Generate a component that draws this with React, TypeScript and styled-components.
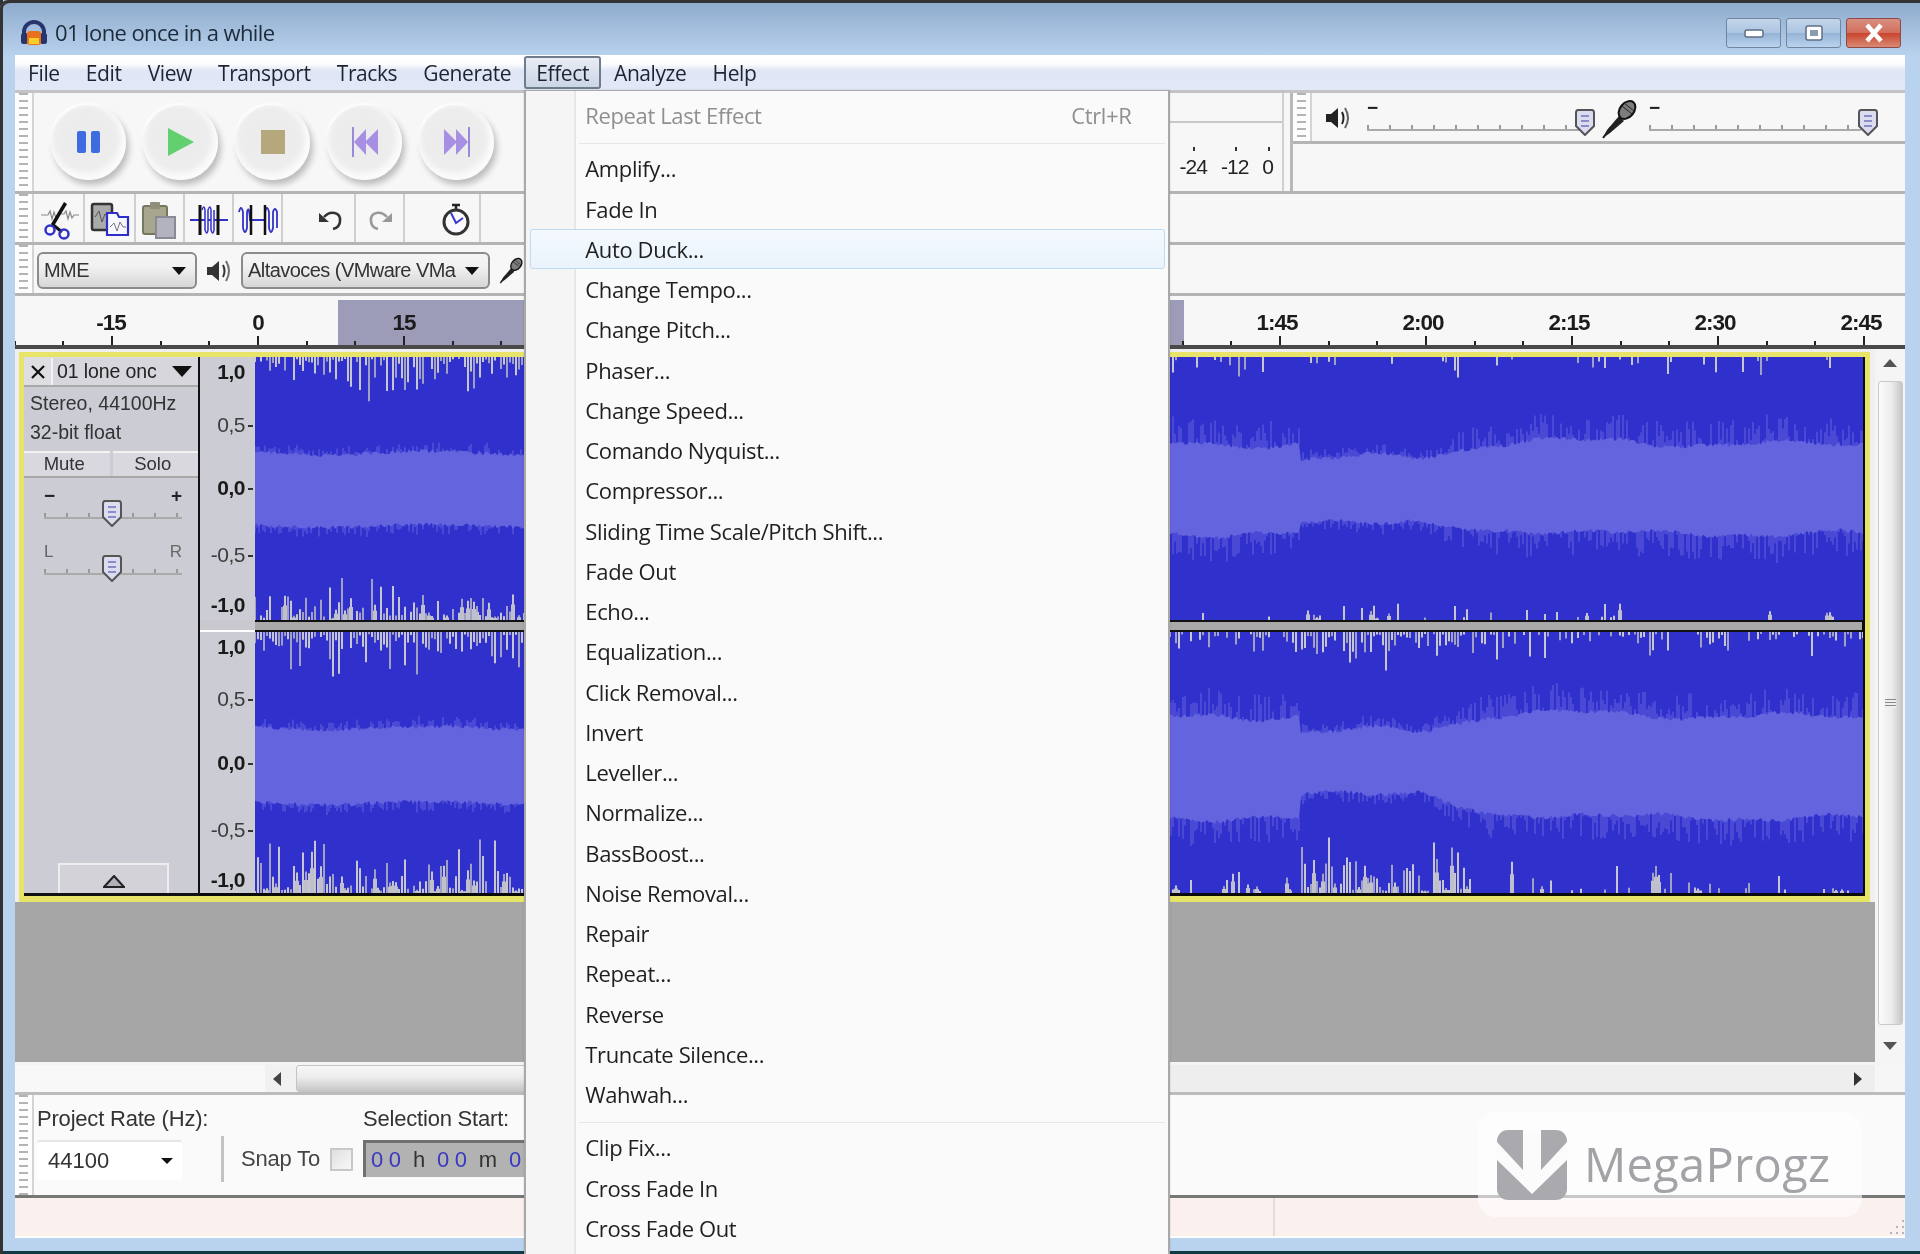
import { useMemo } from 'react';
import styled, { createGlobalStyle } from 'styled-components';

const GlobalStyle = createGlobalStyle`
  html, body { margin: 0; padding: 0; background: #b9d3ee; }
  body { font-family: "Liberation Sans", Arial, sans-serif; color: #222; }
`;

// ---- data ----
const MENUS = ['File', 'Edit', 'View', 'Transport', 'Tracks', 'Generate', 'Effect', 'Analyze', 'Help'];

const EFFECTS_A = [
  'Amplify...', 'Fade In', 'Auto Duck...', 'Change Tempo...', 'Change Pitch...', 'Phaser...', 'Change Speed...',
  'Comando Nyquist...', 'Compressor...', 'Sliding Time Scale/Pitch Shift...', 'Fade Out', 'Echo...', 'Equalization...',
  'Click Removal...', 'Invert', 'Leveller...', 'Normalize...', 'BassBoost...', 'Noise Removal...', 'Repair', 'Repeat...',
  'Reverse', 'Truncate Silence...', 'Wahwah...',
];
const EFFECTS_B = ['Clip Fix...', 'Cross Fade In', 'Cross Fade Out'];

const RULER = [
  { label: '-15', x: 96 }, { label: '0', x: 243 }, { label: '15', x: 389 }, { label: '1:45', x: 1262 },
  { label: '2:00', x: 1408 }, { label: '2:15', x: 1554 }, { label: '2:30', x: 1700 }, { label: '2:45', x: 1846 },
];

const AXIS_1 = [
  { label: '1,0', y: 15, bold: true, tick: false }, { label: '0,5', y: 68, bold: false, tick: true },
  { label: '0,0', y: 131, bold: true, tick: true }, { label: '-0,5', y: 198, bold: false, tick: true },
  { label: '-1,0', y: 248, bold: true, tick: false },
];
const AXIS_2 = [
  { label: '1,0', y: 15, bold: true, tick: false }, { label: '0,5', y: 67, bold: false, tick: true },
  { label: '0,0', y: 131, bold: true, tick: true }, { label: '-0,5', y: 198, bold: false, tick: true },
  { label: '-1,0', y: 248, bold: true, tick: false },
];

// ---- waveform generator, seeded so the picture never changes ----
const seeded = (s: number) => () => {
  s |= 0; s = (s + 0x6d2b79f5) | 0;
  let t = Math.imul(s ^ (s >>> 15), 1 | s);
  t = (t + Math.imul(t ^ (t >>> 7), 61 | t)) ^ t;
  return ((t ^ (t >>> 14)) >>> 0) / 4294967296;
};

type Edge = { left: number; loud: number; other: number };
type ChannelCfg = {
  seed: number; height: number; top: Edge; bottom: Edge;
  spikeTop: (px: number, loud: boolean) => [number, number];
  spikeBottom: (px: number, loud: boolean) => [number, number];
};

const WAVE_W = 1608;

// the quieter stretch around 1:50, sharp at its start and fading at its end
const quiet = (px: number) => {
  if (px < 1300 || px > 1490) return 0;
  if (px < 1420) return 1;
  return (1490 - px) / 70;
};

const buildChannel = (c: ChannelCfg) => {
  const r = seeded(c.seed);
  const tops: string[] = [];
  const bottoms: string[] = [];
  let fringe = '';
  let light = '';
  let dim = '';
  let wide = '';
  for (let x = 0; x <= WAVE_W; x += 2) {
    const px = x + 255;
    const q = quiet(px);
    const isLeft = px < 540;
    const drift = Math.sin(x / 37) * 2 + Math.sin(x / 113) * 1.5;
    const slow = isLeft ? 0 : Math.sin(x / 31) * 2 + Math.sin(x / 13) * 1.5;
    const baseT = isLeft ? c.top.left : c.top.other + (c.top.loud - c.top.other) * q;
    const baseB = isLeft ? c.bottom.left : c.bottom.other + (c.bottom.loud - c.bottom.other) * q;
    const t = baseT + drift + slow + r() * 4;
    const b = baseB + drift - slow + r() * 4;
    tops.push(`${x} ${t.toFixed(1)}`);
    bottoms.unshift(`${x} ${b.toFixed(1)}`);
    const reach = isLeft ? 9 : 26 - 17 * q;
    if (r() > 0.35) {
      fringe += `M${x} ${t + 1}V${(t - r() * reach).toFixed(1)}`;
      fringe += `M${x} ${b - 1}V${(b + r() * reach).toFixed(1)}`;
    }
  }
  for (let x = 0; x <= WAVE_W; x += 3) {
    const px = x + 255;
    const loud = px > 1300 && px < 1460;
    const [dt, lt] = c.spikeTop(px, loud);
    if (r() < dt) {
      const len = (2 + r() * r() * lt).toFixed(1);
      if (r() > 0.45) light += `M${x} 0V${len}`; else dim += `M${x} 0V${len}`;
    }
    const [db, lb] = c.spikeBottom(px, loud);
    if (r() < db) {
      const len = 2 + r() * r() * lb;
      const path = `M${x} ${c.height}V${(c.height - len).toFixed(1)}`;
      if (r() > 0.7) wide += `M${x} ${c.height}V${(c.height - len * 0.6).toFixed(1)}`;
      if (r() > 0.45) light += path; else dim += path;
    }
  }
  return { solid: `M${tops.join('L')}L${bottoms.join('L')}Z`, fringe, light, dim, wide };
};

const CHANNEL_1: ChannelCfg = {
  seed: 11, height: 263,
  top: { left: 93, loud: 100, other: 84 },
  bottom: { left: 166, loud: 164, other: 174 },
  spikeTop: (px) => (px < 540 ? [0.85, 48] : [0.14, 24]),
  spikeBottom: (px) => (px < 540 ? [0.85, 44] : [0.12, 18]),
};
const CHANNEL_2: ChannelCfg = {
  seed: 29, height: 261,
  top: { left: 93, loud: 98, other: 81 },
  bottom: { left: 168, loud: 160, other: 183 },
  spikeTop: (px, loud) => (px < 540 ? [0.9, 50] : loud ? [0.9, 48] : [0.5, 30]),
  spikeBottom: (px, loud) => (px < 540 ? [0.9, 60] : loud ? [0.9, 62] : [0.3, 32]),
};

// ---- window frame ----
const Window = styled.div`
  position: relative;
  width: 1920px;
  height: 1254px;
  overflow: hidden;
  display: flex;
  flex-direction: column;
  background: #b9d3ee;
  box-shadow: inset 3px 0 0 #333, inset 0 -3px 0 #123a44;
  filter: blur(0.55px);
`;

const TitleBar = styled.div`
  height: 55px;
  flex: none;
  display: flex;
  align-items: center;
  padding: 5px 19px 0 20px;
  gap: 7px;
  border-top: 3px solid #333;
  border-top-left-radius: 8px;
  box-sizing: border-box;
  box-shadow: inset 3px 0 0 #333;
  background: linear-gradient(#8facce, #b8d1ec);
`;

const TitleText = styled.span`
  flex: 1;
  font: 22px "Open Sans", sans-serif;
  letter-spacing: -0.6px;
  color: #1d2b3a;
`;

const CaptionButtons = styled.div`
  display: flex;
  gap: 5px;
  margin-top: 2px;
`;

const CaptionButton = styled.div<{ $close?: boolean }>`
  width: 55px;
  height: 30px;
  border: 1px solid ${(p) => (p.$close ? '#8c4a48' : '#70859e')};
  border-radius: 3px;
  display: flex;
  align-items: center;
  justify-content: center;
  box-sizing: border-box;
  background: ${(p) =>
    p.$close
      ? 'linear-gradient(#d88f80, #d2705e 48%, #c9452f 52%, #d88a74)'
      : 'linear-gradient(#c3d5ea, #adc6e2 48%, #95b4d6 52%, #b9d3ee)'};
`;

const Client = styled.div`
  flex: none;
  height: 1183px;
  margin: 0 15px;
  display: flex;
  flex-direction: column;
  background: #f7f7f7;
`;

// ---- menu bar ----
const MenuBar = styled.nav`
  height: 38px;
  flex: none;
  display: flex;
  align-items: center;
  box-sizing: border-box;
  border-bottom: 3px solid #c4c4c8;
  background: linear-gradient(#ffffff 0, #fdfdfe 25%, #e0e6f5 45%, #e2e8f6 100%);
`;

const MenuItem = styled.div<{ $open?: boolean }>`
  position: relative;
  height: 33px;
  padding: 0 ${(p) => (p.$open ? '10px' : '13.1px')};
  display: flex;
  align-items: center;
  box-sizing: border-box;
  border: ${(p) => (p.$open ? '2px solid #6f7c8c' : '0 none')};
  border-radius: 3px;
  font: 21px "Open Sans", sans-serif;
  letter-spacing: -0.42px;
  color: #1c2433;
  background: ${(p) => (p.$open ? 'linear-gradient(#e9edf4, #ccd5e4)' : 'transparent')};
`;

const Popup = styled.div`
  position: absolute;
  left: -2px;
  top: 32px;
  width: 646px;
  height: 1172px;
  box-sizing: border-box;
  padding: 4px 3px 0 4px;
  border: 1px solid #a8a8a8;
  border-width: 1px 2px 0 2px;
  box-shadow: 0 0 2px rgba(0, 0, 0, 0.15);
  background: linear-gradient(to right, #f5f5f5 0 48px, #e6e6e6 48px 50px, #fafafa 50px);
  z-index: 5;
`;

const PopupRow = styled.div<{ $disabled?: boolean; $hover?: boolean }>`
  height: 40.25px;
  box-sizing: border-box;
  display: flex;
  align-items: center;
  justify-content: space-between;
  padding: 0 33px 0 54px;
  border: 1px solid ${(p) => (p.$hover ? '#bcdcf4' : 'transparent')};
  border-radius: 3px;
  background: ${(p) => (p.$hover ? 'linear-gradient(#f4f9fe, #eaf3fc)' : 'transparent')};
  font: 22px "Open Sans", sans-serif;
  letter-spacing: -0.38px;
  color: ${(p) => (p.$disabled ? '#8f8f8f' : '#1f1f1f')};
`;

const PopupRule = styled.div`
  height: 1px;
  margin: 8px 0 4px 49px;
  background: #e8e8e8;
`;

// ---- toolbars ----
const Dock = styled.div`
  height: 203px;
  flex: none;
  display: flex;
  flex-direction: column;
`;

const DockRow = styled.div<{ $h: number }>`
  height: ${(p) => p.$h}px;
  flex: none;
  display: flex;
  box-sizing: border-box;
  border-bottom: 3px solid #b4b4b4;
`;

const Gripper = styled.div`
  width: 19px;
  flex: none;
  box-sizing: border-box;
  border-right: 2px solid #d4d4d4;
  background-color: #fdfdfd;
  background-image: repeating-linear-gradient(to bottom, #b4b4b4 0 2px, transparent 2px 7px);
  background-size: 9px 100%;
  background-repeat: no-repeat;
  background-position: center;
`;

const TransportBar = styled.div`
  flex: 1;
  display: flex;
  align-items: center;
  gap: 17px;
  padding-left: 17px;
`;

const RoundButton = styled.div`
  width: 75px;
  height: 75px;
  flex: none;
  border-radius: 50%;
  display: flex;
  align-items: center;
  justify-content: center;
  background: radial-gradient(circle at 47% 45%, #ebebeb 0, #ededed 52%, #fbfbfb 68%, #f1f1f1 100%);
  box-shadow: 3px 5px 6px rgba(0, 0, 0, 0.24), -1px -2px 3px rgba(255, 255, 255, 0.9);
`;

const MeterDock = styled.div`
  width: 400px;
  flex: none;
  display: flex;
  flex-direction: column;
  border-right: 2px solid #d0d0d0;
`;

const MeterTop = styled.div`
  height: 28px;
  flex: none;
  border-bottom: 2px solid #c8c8c8;
`;

const MeterScale = styled.div`
  flex: 1;
  display: flex;
  justify-content: flex-end;
  gap: 14px;
  padding: 32px 9px 0 0;
`;

const MeterMark = styled.span`
  position: relative;
  font: 21px "Liberation Sans", sans-serif;
  letter-spacing: -1px;
  color: #222;

  &::before {
    content: '';
    position: absolute;
    left: 50%;
    top: -8px;
    width: 2px;
    height: 4px;
    background: #333;
  }
`;

const DockEdge = styled.div`
  width: 6px;
  flex: none;
  background: #f7f7f7;
  border-right: 3px solid #b8b8b8;
`;

const MixerColumn = styled.div`
  width: 612px;
  flex: none;
  display: flex;
  flex-direction: column;
`;

const MixerBar = styled.div`
  height: 51px;
  flex: none;
  display: flex;
  box-sizing: border-box;
  border-bottom: 3px solid #b4b4b4;
  align-items: stretch;
`;

const MixerInner = styled.div`
  flex: 1;
  display: flex;
  align-items: flex-start;
  padding: 6px 0 0 13px;
  gap: 16px;
`;

const MixerSpeaker = styled.div`
  width: 26px;
  flex: none;
  margin-top: 4px;
`;

const MixerMic = styled.div`
  width: 38px;
  flex: none;
  margin: 1px -5px 0 5px;
`;

const EditCell = styled.div<{ $w: number; $line?: boolean }>`
  width: ${(p) => p.$w}px;
  flex: none;
  display: flex;
  align-items: center;
  justify-content: center;
  box-sizing: border-box;
  padding-top: 3px;
  border-right: ${(p) => (p.$line ? '2px solid #cfcfcf' : '0 none')};
`;

const EditGap = styled.div<{ $w: number }>`
  width: ${(p) => p.$w}px;
  flex: none;
`;

const DeviceBar = styled.div`
  flex: 1;
  display: flex;
  align-items: center;
  gap: 9px;
  padding: 3px 0 0 3px;
`;

const Combo = styled.div<{ $w: number }>`
  width: ${(p) => p.$w}px;
  height: 37px;
  flex: none;
  display: flex;
  align-items: center;
  justify-content: space-between;
  box-sizing: border-box;
  padding: 0 9px 0 5px;
  border: 2px solid #8b8b8b;
  border-radius: 6px;
  background: linear-gradient(#f5f5f5, #f1f1f1 40%, #d6d6d6);
  font: 20px "Liberation Sans", sans-serif;
  letter-spacing: -0.55px;
  color: #333;
  white-space: nowrap;
  overflow: hidden;
`;

const Caret = styled.span<{ $w?: number }>`
  flex: none;
  width: 0;
  height: 0;
  border-left: ${(p) => p.$w ?? 7}px solid transparent;
  border-right: ${(p) => p.$w ?? 7}px solid transparent;
  border-top: ${(p) => ((p.$w ?? 7) * 8) / 7}px solid #111;
`;

// ---- slider used on mixer and track panel ----
const SliderBlock = styled.div<{ $w: number }>`
  position: relative;
  width: ${(p) => p.$w}px;
  flex: none;
`;

const SliderEnds = styled.div<{ $dim?: boolean }>`
  display: flex;
  justify-content: space-between;
  height: 18px;
  font: ${(p) => (p.$dim ? '400 17px' : '700 19px')} "Liberation Sans", sans-serif;
  line-height: 18px;
  color: ${(p) => (p.$dim ? '#666' : '#222')};
`;

const SliderTicks = styled.div`
  height: 9px;
  margin-top: 3px;
  border-bottom: 2px solid #aaa;
  background-image: repeating-linear-gradient(to right, #999 0 2px, transparent 2px 22px);
  background-size: 100% 4px;
  background-position: bottom;
  background-repeat: no-repeat;
`;

const Thumb = styled.svg<{ $at: number; $top: number }>`
  position: absolute;
  left: ${(p) => p.$at}px;
  top: ${(p) => p.$top}px;
`;

const MicIcon = ({ big }: { big?: boolean }) => (
  <svg width={big ? 38 : 24} height={big ? 40 : 42} viewBox="0 0 36 40">
    <path d="M2 38 L6 30 L18 16 L23 21 L9 33 Z" fill="#222" />
    <path d="M2 38 L10 27" stroke="#222" strokeWidth="2" />
    <ellipse cx="26" cy="10" rx="7" ry="10" transform="rotate(40 26 10)" fill="#7d7d7d" stroke="#111" strokeWidth="2" />
    <path d="M21 6 L31 14 M23 3 L33 11" stroke="#222" strokeWidth="1" />
  </svg>
);

const SpeakerIcon = ({ color = '#222' }: { color?: string }) => (
  <svg width="26" height="30" viewBox="0 0 26 30">
    <path d="M1 11 H6 L13 5 V25 L6 19 H1 Z" fill={color} />
    <path d="M17 9 Q20 15 17 21" stroke={color} strokeWidth="2" fill="none" />
    <path d="M20 5 Q26 15 20 25" stroke={color} strokeWidth="2" fill="none" opacity="0.7" />
  </svg>
);

const ThumbShape = ({ at, top }: { at: number; top: number }) => (
  <Thumb $at={at} $top={top} width="24" height="28" viewBox="0 0 22 28">
    <path d="M4 2 H18 Q20 2 20 5 V18 L11 27 L2 18 V5 Q2 2 4 2 Z" fill="#dcdcf0" stroke="#555" strokeWidth="2" />
    <path d="M7 8 H15 M7 13 H15 M7 18 H15" stroke="#8c8cc8" strokeWidth="2" />
  </Thumb>
);

// ---- ruler ----
const Ruler = styled.div`
  position: relative;
  height: 53px;
  flex: none;
  box-sizing: border-box;
  border-bottom: 4px solid #4a4a4a;
  background: #f7f7f7;
  overflow: hidden;
`;

const RulerSelection = styled.div`
  position: absolute;
  left: 323px;
  width: 846px;
  top: 4px;
  bottom: 0;
  background: #9c9cb8;
`;

const RulerLabel = styled.span`
  position: absolute;
  top: 14px;
  transform: translateX(-50%);
  font: 700 22.5px "Liberation Sans", sans-serif;
  letter-spacing: -1px;
  color: #1c1c1c;
`;

const RulerTick = styled.i<{ $major: boolean }>`
  position: absolute;
  bottom: 0;
  width: 2px;
  height: ${(p) => (p.$major ? 9 : 4)}px;
  background: #222;
`;

// ---- tracks ----
const TrackArea = styled.div`
  height: 713px;
  flex: none;
  display: flex;
  background: #a6a6a6;
`;

const TrackColumn = styled.div`
  flex: 1;
  min-width: 0;
`;

const TrackFrame = styled.div`
  height: 553px;
  box-sizing: border-box;
  background: #efefef;
  padding: 3px 5px 0 4px;
`;

const TrackBorder = styled.div`
  height: 550px;
  box-sizing: border-box;
  display: flex;
  border: 5px solid #e8e46a;
  border-bottom-width: 6px;
`;

const TrackPanel = styled.div`
  width: 174px;
  flex: none;
  display: flex;
  flex-direction: column;
  background: #cbccd4;
  border-bottom: 3px solid #111;
  border-top: 1px solid #ddd;
`;

const PanelTitle = styled.div`
  height: 27px;
  flex: none;
  display: flex;
  border-bottom: 2px solid #a9a9a9;
`;

const CloseBox = styled.div`
  width: 27px;
  flex: none;
  display: flex;
  align-items: center;
  justify-content: center;
  border-right: 2px solid #f2f2f2;
  background: #dddde2;
`;

const TrackName = styled.div`
  flex: 1;
  display: flex;
  align-items: center;
  justify-content: space-between;
  padding: 0 6px 0 4px;
  font: 19.5px "Liberation Sans", sans-serif;
  letter-spacing: -0.1px;
  color: #222;
  background: #d6d6dc;
`;

const PanelInfo = styled.div`
  height: 64px;
  flex: none;
  box-sizing: border-box;
  padding: 2px 0 0 6px;
  font: 19.5px/29px "Liberation Sans", sans-serif;
  color: #333;
`;

const MuteRow = styled.div`
  height: 27px;
  flex: none;
  display: flex;
  gap: 3px;
  border-bottom: 2px solid #a8a8a8;
  box-sizing: border-box;
`;

const PanelButton = styled.div`
  flex: 1;
  display: flex;
  align-items: center;
  justify-content: center;
  box-sizing: border-box;
  padding: 0 5px 1px 0;
  font: 18.5px "Liberation Sans", sans-serif;
  color: #333;
  background: #d8d8de;
  border-top: 2px solid #f2f2f2;
`;

const PanelSlider = styled(SliderBlock)`
  margin: 9px 0 0 20px;
  height: 47px;
`;

const PanelSpacer = styled.div`
  flex: 1;
`;

const CollapseButton = styled.div`
  width: 111px;
  height: 30px;
  margin-left: 34px;
  box-sizing: border-box;
  display: flex;
  align-items: flex-end;
  justify-content: center;
  padding-bottom: 5px;
  border: 2px solid #eee;
  border-bottom: 0 none;
  background: #d2d2d8;
`;

const PanelRule = styled.div`
  width: 2px;
  flex: none;
  background: #111;
`;

const Channels = styled.div`
  flex: 1;
  min-width: 0;
  display: flex;
  flex-direction: column;
  border-right: 3px solid #0a0a0a;
  border-bottom: 3px solid #0a0a0a;
`;

const ChannelRow = styled.div<{ $h: number }>`
  height: ${(p) => p.$h}px;
  flex: none;
  display: flex;
`;

const ChannelGap = styled.div`
  height: 12px;
  flex: none;
  display: flex;
`;

const GapRuler = styled.div`
  width: 55px;
  flex: none;
  background: #c8c8ce;
  border-bottom: 2px solid #fff;
  box-sizing: border-box;
`;

const GapBar = styled.div`
  flex: 1;
  background: #a9a9a9;
  border-top: 2px solid #111;
  border-bottom: 2px solid #111;
`;

const Axis = styled.div`
  position: relative;
  width: 55px;
  flex: none;
  background: #ccccd4;
`;

const AxisLabel = styled.span<{ $bold: boolean }>`
  position: absolute;
  right: 10px;
  transform: translateY(-50%);
  font: ${(p) => (p.$bold ? 700 : 400)} 21px "Liberation Sans", sans-serif;
  letter-spacing: -0.5px;
  color: ${(p) => (p.$bold ? '#1a1a1a' : '#3c3c3c')};
`;

const AxisTick = styled.i`
  position: absolute;
  right: 2px;
  width: 5px;
  height: 2px;
  background: #333;
`;

const Wave = styled.svg`
  display: block;
  flex: none;
`;

const VScroll = styled.div`
  width: 30px;
  flex: none;
  display: flex;
  flex-direction: column;
  align-items: center;
  background: #f5f5f5;
  box-sizing: border-box;
  padding-top: 10px;
`;

const ScrollThumb = styled.div`
  width: 25px;
  height: 644px;
  margin: 14px 0 17px;
  flex: none;
  display: flex;
  align-items: center;
  justify-content: center;
  box-sizing: border-box;
  border: 1px solid #c9c9c9;
  border-radius: 3px;
  background: linear-gradient(to right, #fbfbfb, #ececec 55%, #c6c6c6);
`;

const ScrollGrip = styled.div`
  width: 11px;
  height: 9px;
  background: repeating-linear-gradient(to bottom, #8a8a8a 0 1px, #eee 1px 3px);
`;

const ArrowUp = styled.span`
  width: 0;
  height: 0;
  border: 7px solid transparent;
  border-top: 0 none;
  border-bottom: 8px solid #555;
`;

const ArrowDown = styled(ArrowUp)`
  border-bottom: 0 none;
  border-top: 8px solid #555;
`;

// ---- horizontal scroll ----
const HScroll = styled.div`
  height: 33px;
  flex: none;
  display: flex;
  align-items: stretch;
  box-sizing: border-box;
  border-top: 3px solid #f4f4f4;
  border-bottom: 3px solid #bcbcbc;
  background: #f8f8f8;
`;

const HSpace = styled.div`
  width: 250px;
  flex: none;
`;

const HButton = styled.div`
  width: 31px;
  flex: none;
  display: flex;
  align-items: center;
  justify-content: center;
  box-sizing: border-box;
  padding-right: 8px;
  background: #f1f1f1;
`;

const HThumb = styled.div`
  width: 600px;
  flex: none;
  border: 1px solid #c4c4c4;
  border-radius: 3px;
  background: linear-gradient(#f7f7f7, #ededed 45%, #c6c6c6);
`;

const HTrack = styled.div`
  flex: 1;
  display: flex;
  justify-content: flex-end;
  align-items: center;
  padding-right: 13px;
  background: #eeeeee;
`;

const HCorner = styled.div`
  width: 30px;
  flex: none;
  background: #f6f6f6;
`;

const ArrowLeft = styled.span`
  width: 0;
  height: 0;
  border: 7px solid transparent;
  border-left: 0 none;
  border-right: 8px solid #444;
`;

const ArrowRight = styled(ArrowLeft)`
  border-right: 0 none;
  border-left: 8px solid #333;
`;

// ---- selection bar ----
const SelectionBar = styled.div`
  height: 103px;
  flex: none;
  display: flex;
  box-sizing: border-box;
  border-bottom: 3px solid #777;
  background: #fafafa;
`;

const RateGroup = styled.div`
  width: 184px;
  flex: none;
  padding: 11px 0 0 3px;
`;

const BarLabel = styled.div`
  font: 22px "Liberation Sans", sans-serif;
  letter-spacing: -0.2px;
  color: #333;
  white-space: nowrap;
`;

const RateCombo = styled.div`
  width: 145px;
  height: 40px;
  margin-top: 8px;
  display: flex;
  align-items: center;
  justify-content: space-between;
  box-sizing: border-box;
  padding: 0 9px 0 11px;
  background: #fff;
  border-radius: 3px;
  border-top: 2px solid #e6e6e6;
  font: 22px "Liberation Sans", sans-serif;
  color: #333;
`;

const BarRule = styled.div`
  width: 3px;
  height: 46px;
  margin: 41px 17px 0 0;
  flex: none;
  background: #c2c2c2;
`;

const SnapGroup = styled.div`
  flex: none;
  width: 122px;
  display: flex;
  align-items: center;
  height: 34px;
  margin-top: 47px;
  gap: 10px;
  font: 22px "Liberation Sans", sans-serif;
  letter-spacing: -0.2px;
  color: #444;
  white-space: nowrap;
`;

const SnapBox = styled.div`
  width: 23px;
  height: 23px;
  flex: none;
  box-sizing: border-box;
  border: 2px solid #c8c8c8;
  background: linear-gradient(135deg, #e0e0e0, #f8f8f8);
`;

const StartGroup = styled.div`
  flex: none;
  padding-top: 11px;
`;

const TimeBox = styled.div`
  width: 240px;
  height: 37px;
  margin-top: 8px;
  display: flex;
  align-items: center;
  box-sizing: border-box;
  padding-left: 5px;
  border-top: 3px solid #707070;
  border-left: 3px solid #707070;
  background: #b2b2b2;
  font: 22px "Liberation Sans", sans-serif;
  letter-spacing: 5.6px;
  word-spacing: -5.5px;
  color: #333;
  white-space: pre;
`;

const Digit = styled.span`
  color: #3838c0;
`;

// ---- status bar + watermark ----
const StatusBar = styled.div`
  height: 40px;
  flex: none;
  display: flex;
  box-sizing: border-box;
  border-bottom: 2px solid #fff;
  background: #faf0ee;
`;

const StatusLeft = styled.div`
  width: 1258px;
  flex: none;
  border-right: 2px solid #e2dcda;
`;

const StatusRight = styled.div`
  flex: 1;
  display: flex;
  align-items: flex-end;
  justify-content: flex-end;
`;

const Watermark = styled.div`
  position: absolute;
  left: 1478px;
  top: 1112px;
  width: 384px;
  height: 105px;
  box-sizing: border-box;
  display: flex;
  align-items: center;
  gap: 17px;
  padding: 0 0 0 19px;
  border-radius: 18px;
  background: rgba(255, 255, 255, 0.6);
  z-index: 3;
`;

const WatermarkText = styled.span`
  font: 47px "Open Sans", sans-serif;
  letter-spacing: 0.3px;
  color: #a2a2a7;
  padding-bottom: 2px;
`;

// ---- icons ----
const AppIcon = () => (
  <svg width="28" height="28" viewBox="0 0 28 28">
    <path d="M4 19 V14 A10 10 0 0 1 24 14 V19" stroke="#26356b" strokeWidth="4" fill="none" />
    <rect x="1" y="15" width="7" height="11" rx="2.5" fill="#26356b" />
    <rect x="20" y="15" width="7" height="11" rx="2.5" fill="#26356b" />
    <rect x="7" y="13" width="14" height="14" rx="3" fill="#e9701c" />
    <rect x="9" y="20" width="10" height="6" fill="#f7cf2c" />
  </svg>
);

const CutIcon = () => (
  <svg width="40" height="40" viewBox="0 0 40 40">
    <path d="M1 15 H8 L10 11 L12 19 L14 12 L16 18 L18 14 H24 L26 11 L28 19 L30 12 L32 18 L34 15 H39" stroke="#888" strokeWidth="1.2" fill="none" />
    <path d="M24 2 L27 4 L14 26 L11 24 Z" fill="#111" />
    <path d="M12 24 L22 32" stroke="#111" strokeWidth="3" />
    <circle cx="10" cy="30" r="4.5" fill="none" stroke="#3232c8" strokeWidth="2.5" />
    <circle cx="24" cy="34" r="4.5" fill="none" stroke="#3232c8" strokeWidth="2.5" />
  </svg>
);

const CopyIcon = () => (
  <svg width="40" height="38" viewBox="0 0 40 38">
    <rect x="2" y="3" width="20" height="26" rx="2" fill="#aaa" stroke="#333" strokeWidth="2.5" />
    <path d="M5 16 L9 10 L12 21 L15 13 L18 16" stroke="#555" fill="none" />
    <path d="M17 12 H27 L29 16 H38 V34 H17 Z" fill="#f7f7ff" stroke="#2f2fc8" strokeWidth="2.2" />
    <path d="M20 26 L24 22 L27 30 L30 21 L33 26 H36" stroke="#777" fill="none" />
  </svg>
);

const PasteIcon = () => (
  <svg width="38" height="40" viewBox="0 0 38 40">
    <rect x="2" y="6" width="24" height="28" rx="2" fill="#a8a68c" stroke="#77765f" strokeWidth="2" />
    <rect x="9" y="2" width="10" height="7" rx="1" fill="#8f8e78" />
    <rect x="15" y="17" width="19" height="21" fill="#b3b3c0" stroke="#8a8a95" strokeWidth="2" />
  </svg>
);

const TrimIcon = () => (
  <svg width="40" height="36" viewBox="0 0 40 36">
    <path d="M1 18 H39" stroke="#3232c8" strokeWidth="2" />
    <path d="M13 8 Q15 2 16 8 V28 Q18 34 19 28 V8 Q21 2 22 8 V28 Q24 34 25 28 V8" fill="#f4f4ff" stroke="#3232c8" strokeWidth="1.5" />
    <path d="M11 3 V33 M29 3 V33" stroke="#111" strokeWidth="3" />
  </svg>
);

const SilenceIcon = () => (
  <svg width="42" height="36" viewBox="0 0 42 36">
    <path d="M2 10 Q4 2 6 10 V26 Q8 34 10 26 V10 Q12 2 13 18 H28 M28 10 Q30 2 32 10 V26 Q34 34 36 26 V10 Q38 4 40 10 V26" fill="none" stroke="#3232c8" strokeWidth="1.8" />
    <path d="M14 3 V33 M28 3 V33" stroke="#111" strokeWidth="2.5" />
  </svg>
);

const UndoIcon = ({ flip, color }: { flip?: boolean; color: string }) => (
  <svg width="26" height="26" viewBox="0 0 26 26" transform={flip ? 'scale(-1 1)' : undefined}>
    <path d="M6 10 C12 3 23 5 22 14 C22 18 19 21 15 22" stroke={color} strokeWidth="2.6" fill="none" />
    <path d="M1 6 L11 15 L1 15 Z" fill={color} />
  </svg>
);

const TimerIcon = () => (
  <svg width="30" height="34" viewBox="0 0 30 34">
    <path d="M11 2 H19 M15 2 V7" stroke="#222" strokeWidth="2.5" />
    <circle cx="15" cy="19" r="12" fill="#fbfbff" stroke="#333" strokeWidth="3" />
    <path d="M10 10 L15 20 L22 15" stroke="#3a3ac8" strokeWidth="2" fill="none" />
  </svg>
);

const LogoMark = () => (
  <svg width="70" height="70" viewBox="0 0 70 70">
    <rect x="0" y="0" width="70" height="70" rx="11" fill="#aaaaae" />
    <polygon points="0,12 26,40 26,0 44,0 44,40 70,12 70,30 35,64 0,30" fill="#fbfbfb" />
  </svg>
);

const ResizeGrip = () => (
  <svg width="18" height="18" viewBox="0 0 18 18">
    <path d="M16 2 V4 M16 8 V10 M16 14 V16 M10 8 V10 M10 14 V16 M4 14 V16" stroke="#b5b5b5" strokeWidth="2" />
  </svg>
);

const WaveForm = ({ cfg }: { cfg: ChannelCfg }) => {
  const d = useMemo(() => buildChannel(cfg), [cfg]);
  return (
    <Wave width={WAVE_W} height={cfg.height} viewBox={`0 0 ${WAVE_W} ${cfg.height}`}>
      <rect width={WAVE_W} height={cfg.height} fill="#3030cc" />
      <path d={d.fringe} stroke="#5151d8" strokeWidth="1.6" fill="none" />
      <path d={d.solid} fill="#6464de" />
      <path d={d.dim} stroke="#a0a0c4" strokeWidth="2" fill="none" />
      <path d={d.light} stroke="#c6c6d2" strokeWidth="2" fill="none" />
      <path d={d.wide} stroke="#c0c0cc" strokeWidth="4" fill="none" />
    </Wave>
  );
};

const ChannelAxis = ({ rows }: { rows: typeof AXIS_1 }) => (
  <Axis>
    {rows.map((r) => (
      <div key={r.label}>
        <AxisLabel $bold={r.bold} style={{ top: r.y }}>{r.label}</AxisLabel>
        {r.tick && <AxisTick style={{ top: r.y }} />}
      </div>
    ))}
  </Axis>
);

const App = () => {
  const ticks = useMemo(() => {
    const list: { x: number; major: boolean }[] = [];
    for (let i = 0; i < 40; i++) list.push({ x: i * 48.67 - 1.3, major: (i - 2) % 3 === 0 });
    return list;
  }, []);

  return (
    <>
      <GlobalStyle />
      <Window>
        <TitleBar>
          <AppIcon />
          <TitleText>01 lone once in a while</TitleText>
          <CaptionButtons>
            <CaptionButton>
              <svg width="20" height="12" viewBox="0 0 20 12"><rect x="1" y="3" width="18" height="7" rx="2" fill="#fff" stroke="#5d6f85" strokeWidth="1.5" /></svg>
            </CaptionButton>
            <CaptionButton>
              <svg width="20" height="18" viewBox="0 0 20 18"><rect x="2" y="2" width="16" height="14" rx="2" fill="#fff" stroke="#5d6f85" strokeWidth="1.5" /><rect x="6" y="6" width="8" height="6" fill="#8b9cb0" /></svg>
            </CaptionButton>
            <CaptionButton $close>
              <svg width="22" height="20" viewBox="0 0 22 20"><path d="M4 2 L18 18 M18 2 L4 18" stroke="#fff" strokeWidth="4.5" /></svg>
            </CaptionButton>
          </CaptionButtons>
        </TitleBar>

        <Client>
          <MenuBar>
            {MENUS.map((m) =>
              m === 'Effect' ? (
                <MenuItem key={m} $open>
                  {m}
                  <Popup>
                    <PopupRow $disabled>
                      <span>Repeat Last Effect</span>
                      <span>Ctrl+R</span>
                    </PopupRow>
                    <PopupRule />
                    {EFFECTS_A.map((e) => (
                      <PopupRow key={e} $hover={e === 'Auto Duck...'}>{e}</PopupRow>
                    ))}
                    <PopupRule />
                    {EFFECTS_B.map((e) => (
                      <PopupRow key={e}>{e}</PopupRow>
                    ))}
                  </Popup>
                </MenuItem>
              ) : (
                <MenuItem key={m}>{m}</MenuItem>
              ),
            )}
          </MenuBar>

          <Dock>
            <DockRow $h={101}>
              <Gripper />
              <TransportBar>
                <RoundButton>
                  <svg width="26" height="24" viewBox="0 0 26 24"><rect x="1" y="1" width="9" height="22" rx="2" fill="#3f6be0" /><rect x="15" y="1" width="9" height="22" rx="2" fill="#3f6be0" /></svg>
                </RoundButton>
                <RoundButton>
                  <svg width="30" height="30" viewBox="0 0 30 30"><polygon points="2,1 28,15 2,29" fill="#62d06f" /></svg>
                </RoundButton>
                <RoundButton>
                  <svg width="24" height="24" viewBox="0 0 24 24"><rect width="24" height="24" fill="#b5a87c" /></svg>
                </RoundButton>
                <RoundButton>
                  <svg width="28" height="30" viewBox="0 0 28 30"><rect x="1" y="0" width="2" height="30" fill="#9a88d8" /><polygon points="15,2 3,15 15,28" fill="#a78fe4" /><polygon points="27,2 14,15 27,28" fill="#a78fe4" /></svg>
                </RoundButton>
                <RoundButton>
                  <svg width="28" height="30" viewBox="0 0 28 30"><rect x="25" y="0" width="2" height="30" fill="#9a88d8" /><polygon points="13,2 25,15 13,28" fill="#a78fe4" /><polygon points="1,2 14,15 1,28" fill="#a78fe4" /></svg>
                </RoundButton>
              </TransportBar>
              <MeterDock>
                <MeterTop />
                <MeterScale>
                  <MeterMark>-24</MeterMark>
                  <MeterMark>-12</MeterMark>
                  <MeterMark>0</MeterMark>
                </MeterScale>
              </MeterDock>
              <DockEdge />
              <MixerColumn>
                <MixerBar>
                  <Gripper />
                  <MixerInner>
                    <MixerSpeaker><SpeakerIcon /></MixerSpeaker>
                    <SliderBlock $w={212}>
                      <SliderEnds><span>−</span></SliderEnds>
                      <SliderTicks />
                      <ThumbShape at={206} top={9} />
                    </SliderBlock>
                    <MixerMic><MicIcon big /></MixerMic>
                    <SliderBlock $w={212}>
                      <SliderEnds><span>−</span></SliderEnds>
                      <SliderTicks />
                      <ThumbShape at={207} top={9} />
                    </SliderBlock>
                  </MixerInner>
                </MixerBar>
              </MixerColumn>
            </DockRow>

            <DockRow $h={51}>
              <Gripper />
              <EditGap $w={2} />
              <EditCell $w={49} $line><CutIcon /></EditCell>
              <EditCell $w={51} $line><CopyIcon /></EditCell>
              <EditCell $w={49} $line><PasteIcon /></EditCell>
              <EditCell $w={49} $line><TrimIcon /></EditCell>
              <EditCell $w={49} $line><SilenceIcon /></EditCell>
              <EditGap $w={25} />
              <EditCell $w={48} $line><UndoIcon color="#333" /></EditCell>
              <EditCell $w={49} $line><UndoIcon flip color="#999" /></EditCell>
              <EditGap $w={27} />
              <EditCell $w={49} $line><TimerIcon /></EditCell>
            </DockRow>

            <DockRow $h={51}>
              <Gripper />
              <DeviceBar>
                <Combo $w={160}>
                  <span>MME</span>
                  <Caret />
                </Combo>
                <SpeakerIcon color="#333" />
                <Combo $w={249}>
                  <span>Altavoces (VMware VMa</span>
                  <Caret />
                </Combo>
                <MicIcon />
              </DeviceBar>
            </DockRow>
          </Dock>

          <Ruler>
            <RulerSelection />
            {ticks.map((t) => (
              <RulerTick key={t.x} $major={t.major} style={{ left: t.x }} />
            ))}
            {RULER.map((r) => (
              <RulerLabel key={r.label} style={{ left: r.x }}>{r.label}</RulerLabel>
            ))}
          </Ruler>

          <TrackArea>
            <TrackColumn>
              <TrackFrame>
                <TrackBorder>
                  <TrackPanel>
                    <PanelTitle>
                      <CloseBox>
                        <svg width="16" height="16" viewBox="0 0 16 16"><path d="M2 2 L14 14 M14 2 L2 14" stroke="#111" strokeWidth="2.2" /></svg>
                      </CloseBox>
                      <TrackName>
                        <span>01 lone onc</span>
                        <Caret $w={10} />
                      </TrackName>
                    </PanelTitle>
                    <PanelInfo>
                      Stereo, 44100Hz
                      <br />
                      32-bit float
                    </PanelInfo>
                    <MuteRow>
                      <PanelButton>Mute</PanelButton>
                      <PanelButton>Solo</PanelButton>
                    </MuteRow>
                    <PanelSlider $w={138}>
                      <SliderEnds><span>−</span><span>+</span></SliderEnds>
                      <SliderTicks />
                      <ThumbShape at={56} top={12} />
                    </PanelSlider>
                    <PanelSlider $w={138}>
                      <SliderEnds $dim><span>L</span><span>R</span></SliderEnds>
                      <SliderTicks />
                      <ThumbShape at={56} top={11} />
                    </PanelSlider>
                    <PanelSpacer />
                    <CollapseButton>
                      <svg width="22" height="13" viewBox="0 0 22 13"><polygon points="11,1 21,12 1,12" fill="#b0b0b8" stroke="#222" strokeWidth="2" /></svg>
                    </CollapseButton>
                  </TrackPanel>
                  <PanelRule />
                  <Channels>
                    <ChannelRow $h={263}>
                      <ChannelAxis rows={AXIS_1} />
                      <WaveForm cfg={CHANNEL_1} />
                    </ChannelRow>
                    <ChannelGap>
                      <GapRuler />
                      <GapBar />
                    </ChannelGap>
                    <ChannelRow $h={261}>
                      <ChannelAxis rows={AXIS_2} />
                      <WaveForm cfg={CHANNEL_2} />
                    </ChannelRow>
                  </Channels>
                </TrackBorder>
              </TrackFrame>
            </TrackColumn>
            <VScroll>
              <ArrowUp />
              <ScrollThumb><ScrollGrip /></ScrollThumb>
              <ArrowDown />
            </VScroll>
          </TrackArea>

          <HScroll>
            <HSpace />
            <HButton><ArrowLeft /></HButton>
            <HThumb />
            <HTrack><ArrowRight /></HTrack>
            <HCorner />
          </HScroll>

          <SelectionBar>
            <Gripper />
            <RateGroup>
              <BarLabel>Project Rate (Hz):</BarLabel>
              <RateCombo>
                <span>44100</span>
                <Caret $w={6} />
              </RateCombo>
            </RateGroup>
            <BarRule />
            <SnapGroup>
              <span>Snap To</span>
              <SnapBox />
            </SnapGroup>
            <StartGroup>
              <BarLabel>Selection Start:</BarLabel>
              <TimeBox>
                <Digit>00</Digit> h <Digit>00</Digit> m <Digit>00</Digit>
              </TimeBox>
            </StartGroup>
          </SelectionBar>

          <StatusBar>
            <StatusLeft />
            <StatusRight><ResizeGrip /></StatusRight>
          </StatusBar>
        </Client>

        <Watermark>
          <LogoMark />
          <WatermarkText>MegaProgz</WatermarkText>
        </Watermark>
      </Window>
    </>
  );
};

export default App;
